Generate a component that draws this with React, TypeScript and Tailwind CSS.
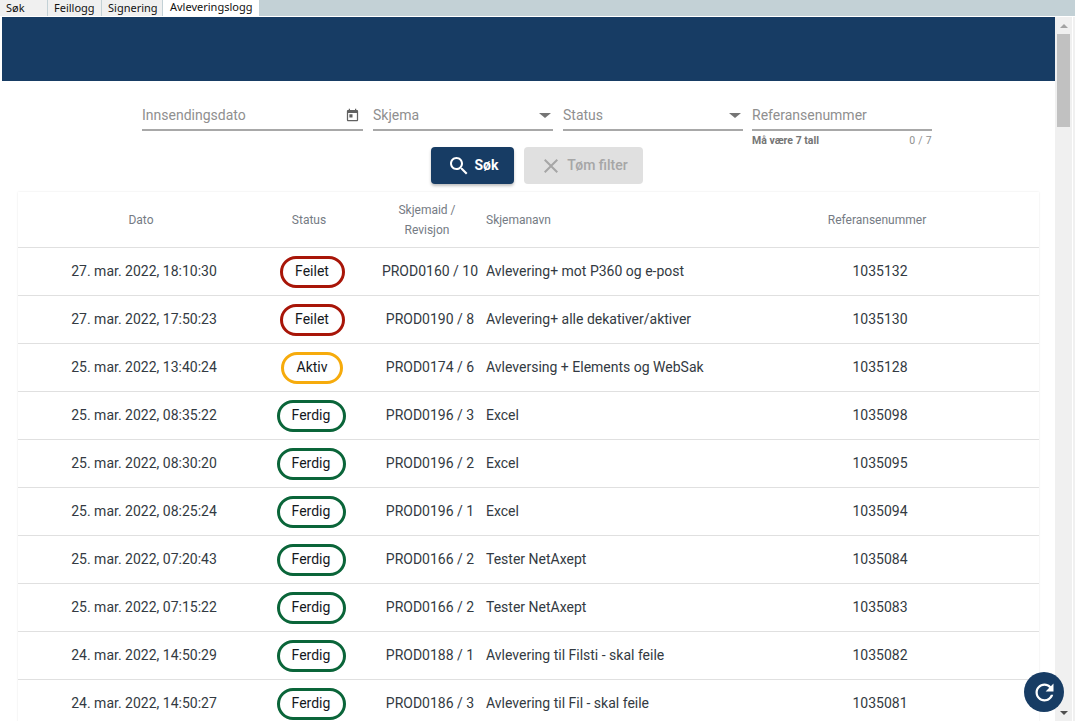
import React from "react";

const rows = [
  { dato: "27. mar. 2022, 18:10:30", status: "Feilet", id: "PROD0160 / 10", navn: "Avlevering+ mot P360 og e-post", ref: "1035132" },
  { dato: "27. mar. 2022, 17:50:23", status: "Feilet", id: "PROD0190 / 8", navn: "Avlevering+ alle dekativer/aktiver", ref: "1035130" },
  { dato: "25. mar. 2022, 13:40:24", status: "Aktiv", id: "PROD0174 / 6", navn: "Avleversing + Elements og WebSak", ref: "1035128" },
  { dato: "25. mar. 2022, 08:35:22", status: "Ferdig", id: "PROD0196 / 3", navn: "Excel", ref: "1035098" },
  { dato: "25. mar. 2022, 08:30:20", status: "Ferdig", id: "PROD0196 / 2", navn: "Excel", ref: "1035095" },
  { dato: "25. mar. 2022, 08:25:24", status: "Ferdig", id: "PROD0196 / 1", navn: "Excel", ref: "1035094" },
  { dato: "25. mar. 2022, 07:20:43", status: "Ferdig", id: "PROD0166 / 2", navn: "Tester NetAxept", ref: "1035084" },
  { dato: "25. mar. 2022, 07:15:22", status: "Ferdig", id: "PROD0166 / 2", navn: "Tester NetAxept", ref: "1035083" },
  { dato: "24. mar. 2022, 14:50:29", status: "Ferdig", id: "PROD0188 / 1", navn: "Avlevering til Filsti - skal feile", ref: "1035082" },
  { dato: "24. mar. 2022, 14:50:27", status: "Ferdig", id: "PROD0186 / 3", navn: "Avlevering til Fil - skal feile", ref: "1035081" },
];

const tabs = [
  { label: "Søk", width: "w-[47px]" },
  { label: "Feillogg", width: "w-[53px]" },
  { label: "Signering", width: "w-[60px]" },
];

function Badge({ status }: { status: string }) {
  const style =
    status === "Feilet"
      ? "w-[65px] border-[#a81508]"
      : status === "Aktiv"
        ? "w-[62px] border-[#f6ab0c]"
        : "mr-[2px] w-[69px] border-[#0a6539]";
  return (
    <span className={`flex h-[32px] items-center justify-center rounded-full border-[3px] text-[14px] font-normal text-[#14181d] ${style}`}>
      {status}
    </span>
  );
}

function Icon({ d, className }: { d: string; className: string }) {
  return (
    <svg viewBox="0 0 24 24" className={className} fill="currentColor">
      <path d={d} />
    </svg>
  );
}

function Field({ label, width, children }: { label: string; width: string; children?: React.ReactNode }) {
  return (
    <div className={`flex h-[29px] items-center justify-between border-b-2 border-[#a8a8a8] ${width}`}>
      <span className="text-[14px] text-[#8f8f8f]">{label}</span>
      {children}
    </div>
  );
}

function Caret() {
  return <span className="mr-[2px] h-0 w-0 border-x-[6px] border-t-[5px] border-x-transparent border-t-[#757575]" />;
}

export default function App() {
  return (
    <div className="relative flex h-[721px] w-[1075px] flex-col overflow-hidden bg-white font-['Roboto',sans-serif]">
      {/* Tabs */}
      <div className="flex h-[16px] shrink-0 bg-[#c3d1d6] font-['Noto_Sans',sans-serif] text-[11px] leading-[14px] text-[#111]">
        {tabs.map((t) => (
          <div key={t.label} className={`mr-px h-[16px] bg-[#f0f0f0] pl-[6px] pt-px ${t.width}`}>
            {t.label}
          </div>
        ))}
        <div className="h-[16px] w-[96px] bg-white pl-[7px]">Avleveringslogg</div>
      </div>

      <div className="flex min-h-0 flex-1 pt-px">
        <div className="min-w-0 flex-1 pl-[2px]">
          {/* Header */}
          <div className="h-[64px] bg-[#173c64]" />

          {/* Filters */}
          <div className="flex pl-[140px] pt-[21px]">
            <Field label="Innsendingsdato" width="w-[221px]">
              <Icon
                className="mr-[3px] h-[15px] w-[15px] text-[#616161]"
                d="M19 3h-1V1h-2v2H8V1H6v2H5c-1.11 0-1.99.9-1.99 2L3 19c0 1.1.89 2 2 2h14c1.1 0 2-.9 2-2V5c0-1.1-.9-2-2-2zm0 16H5V8h14v11zM7 10h5v5H7z"
              />
            </Field>
            <div className="ml-[10px]">
              <Field label="Skjema" width="w-[180px]">
                <Caret />
              </Field>
            </div>
            <div className="ml-[10px]">
              <Field label="Status" width="w-[180px]">
                <Caret />
              </Field>
            </div>
            <div className="ml-[9px] w-[180px]">
              <Field label="Referansenummer" width="w-[180px]" />
              <div className="flex justify-between pt-[3px] text-[10.5px] leading-[14px]">
                <span className="font-bold text-[#757575]">Må være 7 tall</span>
                <span className="tracking-[0.3px] text-[#8f8f8f]">0 / 7</span>
              </div>
            </div>
          </div>

          {/* Buttons */}
          <div className="-mt-px flex gap-[10px] pl-[429px]">
            <button className="flex h-[37px] w-[83px] items-center justify-center gap-[4px] rounded-[4px] bg-[#173c64] text-[14px] font-bold text-white shadow-[0_2px_3px_rgba(0,0,0,0.25)]">
              <Icon
                className="h-[24px] w-[24px]"
                d="M15.5 14h-.79l-.28-.27C15.41 12.59 16 11.11 16 9.5 16 5.91 13.09 3 9.5 3S3 5.91 3 9.5 5.91 16 9.5 16c1.61 0 3.09-.59 4.23-1.57l.27.28v.79l5 4.99L20.49 19l-4.99-5zm-6 0C7.01 14 5 11.99 5 9.5S7.01 5 9.5 5 14 7.01 14 9.5 11.99 14 9.5 14z"
              />
              Søk
            </button>
            <button className="flex h-[37px] w-[119px] items-center justify-center gap-[4px] rounded-[4px] bg-[#e0e0e0] text-[14px] font-medium text-[#a6a6a6]">
              <Icon
                className="h-[24px] w-[24px]"
                d="M19 6.41L17.59 5 12 10.59 6.41 5 5 6.41 10.59 12 5 17.59 6.41 19 12 13.41 17.59 19 19 17.59 13.41 12z"
              />
              Tøm filter
            </button>
          </div>

          {/* Table */}
          <div className="ml-[16px] mt-[8px] w-[1021px] shadow-[0_0_2px_rgba(0,0,0,0.1)]">
            <div className="grid h-[56px] grid-cols-[232px_124px_112px_235px_1fr] items-center border-b border-[#e0e0e0] text-[12px] leading-[20px] text-[#757b84]">
              <div className="pl-[14px] text-center">Dato</div>
              <div className="pr-[6px] text-center">Status</div>
              <div className="pr-[6px] text-center">
                Skjemaid /<br />
                Revisjon
              </div>
              <div>Skjemanavn</div>
              <div className="pr-[6px] text-center">Referansenummer</div>
            </div>
            {rows.map((r) => (
              <div
                key={r.ref}
                className="grid h-[48px] grid-cols-[232px_124px_112px_235px_1fr] items-center border-b border-[#e0e0e0] text-[14px] text-[#333a42]"
              >
                <div className="pl-[20px] text-center">{r.dato}</div>
                <div className="flex justify-center">
                  <Badge status={r.status} />
                </div>
                <div className="whitespace-nowrap text-center">{r.id}</div>
                <div className="whitespace-nowrap">{r.navn}</div>
                <div className="text-center">{r.ref}</div>
              </div>
            ))}
          </div>
        </div>

        {/* Scrollbar */}
        <div className="flex w-[17px] shrink-0 flex-col items-center bg-[#f0f0f0] pt-[7px]">
          <span className="h-0 w-0 border-x-[4px] border-b-[4px] border-x-transparent border-b-[#a3a3a3]" />
          <div className="mt-[6px] h-[93px] w-[13px] bg-[#c1c1c1]" />
          <div className="flex-1" />
          <span className="mb-[6px] h-0 w-0 border-x-[4px] border-t-[4px] border-x-transparent border-t-[#505050]" />
        </div>
        <div className="w-[3px] shrink-0 border-l border-white bg-[#f0f0f0]" />
      </div>

      {/* Refresh */}
      <button className="absolute left-[1024px] top-[672px] flex h-[40px] w-[40px] items-center justify-center rounded-full bg-[#173c64] text-white">
        <Icon
          className="h-[27px] w-[27px]"
          d="M17.65 6.35C16.2 4.9 14.21 4 12 4c-4.42 0-7.99 3.58-7.99 8s3.57 8 7.99 8c3.73 0 6.84-2.55 7.73-6h-2.08c-.82 2.33-3.04 4-5.65 4-3.31 0-6-2.69-6-6s2.69-6 6-6c1.66 0 3.14.69 4.22 1.78L13 11h7V4l-2.35 2.35z"
        />
      </button>
    </div>
  );
}
